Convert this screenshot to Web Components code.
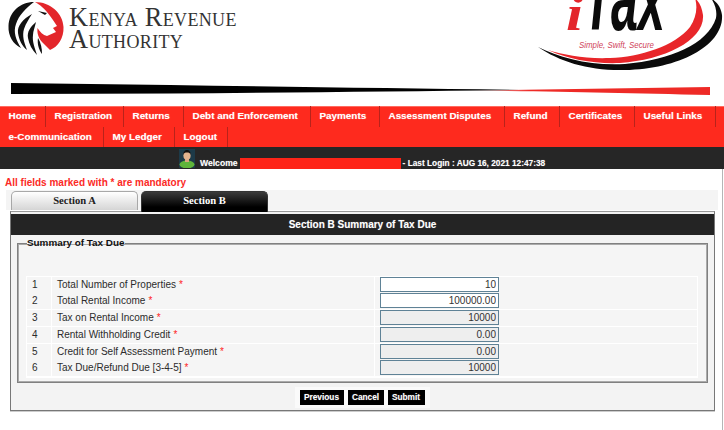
<!DOCTYPE html>
<html><head><meta charset="utf-8"><title>iTax</title>
<style>
html,body{margin:0;padding:0;background:#fff;overflow:hidden}
body{width:724px;height:430px;font-family:"Liberation Sans",Arial,sans-serif}
</style></head><body>
<kra-page>
  <kra-header></kra-header>
  <kra-nav></kra-nav>
  <kra-welcome></kra-welcome>
  <kra-main>
    <kra-tabs></kra-tabs>
    <kra-panel heading="Section B Summary of Tax Due">
      <kra-fieldset legend="Summary of Tax Due">
        <kra-row num="1" label="Total Number of Properties" value="10"></kra-row>
        <kra-row num="2" label="Total Rental Income" value="100000.00"></kra-row>
        <kra-row num="3" label="Tax on Rental Income" value="10000" readonly></kra-row>
        <kra-row num="4" label="Rental Withholding Credit" value="0.00" readonly></kra-row>
        <kra-row num="5" label="Credit for Self Assessment Payment" value="0.00" readonly></kra-row>
        <kra-row num="6" label="Tax Due/Refund Due [3-4-5]" value="10000" readonly></kra-row>
      </kra-fieldset>
      <kra-actions></kra-actions>
    </kra-panel>
  </kra-main>
</kra-page>
<script>
function def(name, css, html){
  customElements.define(name, class extends HTMLElement{
    connectedCallback(){
      if(this.shadowRoot) return;
      const r=this.attachShadow({mode:'open'});
      const h=typeof html==='function'?html(this):html;
      r.innerHTML='<style>'+css+'</style>'+h;
    }
  });
}
def('kra-page',':host{display:block;width:724px;height:430px;overflow:hidden}','<slot></slot>');

def('kra-header',`
:host{display:block;height:106px;overflow:hidden;background:#fff}
.top{display:flex;height:81px}
.lion{flex:none;width:70px;height:60px;display:block}
.name{flex:none;margin:6px 0 0 -1px;font-family:"Liberation Serif",serif;font-variant:small-caps;color:#333;font-size:26.4px;line-height:22px;letter-spacing:.35px;white-space:nowrap}
.tax{flex:none;margin-left:auto;width:194px;height:75px;display:block;overflow:hidden}
.sw{display:block;width:724px;height:25px}
`,`
<div class="top">
<svg class="lion" viewBox="0 0 70 60" aria-hidden="true">
  <path fill="#e3262b" d="M35 2C50 2 63 13 63.500 27 64 38 58 47 50 50L42 42C38 37 37 33 37.500 28 40 32 43 35 47 36L56 32 53 28 57 26C53 20 48 12 42 7 40 5 37 3 35 2Z"/>
  <path fill="#111" d="M34 2C20 2 9 12 8.500 26 8 36 13 44 21 48 16 40 13 32 16 24 19 15 26 8 34 2Z"/>
  <path fill="#111" d="M32 14C23 19 17 26 18 33 19 40 22 46 27 50 24 42 22 36 24 29 26 23 29 19 32 14Z"/>
  <path fill="#111" d="M36 22C30 27 27 32 28 38 29 44 32 50 37 55 35 48 32 42 33 35 33 31 35 27 36 22Z"/>
  <path fill="#111" d="M38 38C37 44 39 50 42 54 42 48 41 43 38 38Z"/>
  <path fill="#111" d="M38 11L47 13 45 15Z"/>
</svg>
<div class="name">Kenya Revenue<br>Authority</div>
<svg class="tax" viewBox="530 0 194 75">
  <path fill="#0b0b0b" d="M538 47C560 62 590 71 625 70 680 69 724 45 722 15 721 8 718 3 711-2 716 6 717 12 716 18 708 44 670 60 625 64 590 66 560 58 538 47Z"/>
  <path fill="#e8262a" d="M548 50C570 60 595 64 620 63 665 60 705 40 703 15 702 8 700 3 695-2 698 8 696 18 690 27 675 46 640 57 610 58 585 59 565 55 548 50Z"/>
  <text x="583" y="30" font-family="Liberation Sans" font-style="italic" font-weight="700" font-size="92" fill="#0b0b0b" textLength="82" lengthAdjust="spacingAndGlyphs">Tax</text>
  <text x="566" y="30" font-family="Liberation Serif" font-style="italic" font-weight="700" font-size="50" fill="#e3262b" textLength="17" lengthAdjust="spacingAndGlyphs">i</text>
  <text x="579" y="48" font-family="Liberation Sans" font-style="italic" font-size="8.6" fill="#d0435a" textLength="75" lengthAdjust="spacingAndGlyphs">Simple, Swift, Secure</text>
</svg>
</div>
<svg class="sw" viewBox="0 81 724 25" aria-hidden="true">
  <defs><linearGradient id="g" x1="0" x2="1"><stop offset="0" stop-color="#e8262a" stop-opacity=".1"/><stop offset=".25" stop-color="#ee2a26"/><stop offset="1" stop-color="#ee2a26"/></linearGradient></defs>
  <path fill="#000" d="M11 83L11 94 170 93.500C300 92.500 420 91 530 90 420 88.500 300 87 170 85Z"/>
  <path fill="url(#g)" d="M470 90.500L710 87 710 95C620 93 560 91.500 470 90.500Z"/>
</svg>`);

const rows=[
 [['Home',46],['Registration',78],['Returns',60],['Debt and Enforcement',127],['Payments',69],['Assessment Disputes',125],['Refund',55],['Certificates',75],['Useful Links',81]],
 [['e-Communication',104],['My Ledger',71],['Logout',53]]
];
def('kra-nav-item',`
:host{display:block;flex:none;box-sizing:border-box;padding-left:8.5px;border-right:1px solid #b8231b;height:20.5px;color:#fff;font:bold 9.9px/19px "Liberation Sans",sans-serif;white-space:nowrap;text-shadow:0 0 1px rgba(255,255,255,.5)}
`,'<slot></slot>');
def('kra-nav',`
:host{display:block;height:41px;background:#fe2a1e;box-shadow:inset 0 1px 0 #ff6a60}
.r{display:flex;height:20.5px}
`,()=>rows.map(r=>'<div class="r">'+r.map(([t,w])=>`<kra-nav-item style="width:${w}px">${t}</kra-nav-item>`).join('')+'</div>').join(''));

def('kra-welcome',`
:host{display:flex;align-items:flex-end;height:22px;background:#262626;padding-left:179px;box-sizing:border-box;color:#fff;font:bold 8.6px/11px "Liberation Sans",sans-serif;white-space:nowrap;text-shadow:0 0 1px rgba(255,255,255,.4)}
svg{flex:none;width:16px;height:19px;align-self:flex-start;margin-top:2px;display:block}
.w{margin-left:5px}
.red{flex:none;width:161px;height:11px;background:#fe2418;margin:0 2px}
.l{font-size:8.3px}
`,`<svg viewBox="0 0 16 19" aria-hidden="true">
<rect width="16" height="19" fill="#1d3a48"/>
<ellipse cx="8" cy="15.5" rx="7.5" ry="4" fill="#5fb53a"/>
<rect x="6" y="9" width="4" height="4" fill="#d9a67f"/>
<ellipse cx="8" cy="6.5" rx="3.6" ry="4.4" fill="#e3b48e"/>
<path d="M4.300 6C4 2.500 6 1 8 1s4 1.500 3.700 5C11 4 10 3.600 8 3.600S5 4 4.300 6Z" fill="#111"/>
</svg><span class="w">Welcome</span><span class="red"></span><span class="l">- Last Login : AUG 16, 2021 12:47:38</span>`);

def('kra-main',`
:host{display:block;height:261px;box-sizing:border-box;margin-right:1px;border-right:1px solid #b5b5b5;background:#fff}
.m{font:bold 10px/14px "Liberation Sans",sans-serif;color:#fb2a26;padding:7px 0 0 5px;height:14px;white-space:nowrap}
`,`<div class="m">All fields marked with * are mandatory</div><slot></slot>`);

def('kra-tabs',`
:host{display:flex;gap:3px;box-sizing:border-box;height:20px;width:712px;margin:0 0 0 6px;padding:1px 0 0 5px;background:#f4f4f4;position:relative;z-index:1}
.t{flex:none;width:127px;height:19px;box-sizing:border-box;border-radius:5px 5px 0 0;text-align:center;font:bold 10.6px/17px "Liberation Serif",serif;white-space:nowrap}
.a{background:linear-gradient(#fff,#d5d5d5);border:1px solid #a8a8a8;border-bottom:0;color:#222}
.b{height:21px;background:linear-gradient(#3a3a3a,#000 75%);border:1px solid #333;border-bottom:0;color:#fff}
`,`<div class="t a">Section A</div><div class="t b">Section B</div>`);

def('kra-panel',`
:host{display:block;box-sizing:border-box;width:705px;height:200px;margin:1px 0 0 10px;border:1px solid #777;border-top-color:#999;background:#f3f3f3;padding-top:2px;box-shadow:0 1px 0 #ccc}
.h{height:21px;background:#242424;color:#fff;text-align:center;font:bold 10px/21px "Liberation Sans",sans-serif;text-shadow:0 0 1px rgba(255,255,255,.35)}
`,(el)=>`<div class="h">${el.getAttribute('heading')}</div><slot></slot>`);

def('kra-fieldset',`
:host{display:block;margin:0 6px 0 6px}
fieldset{margin:1px 0 0;padding:25.5px 8px 0 8px;height:147px;box-sizing:border-box;border:1px solid #808080;box-shadow:inset 0 0 0 1px #aaa;background:#f5f5f5}
legend{padding:0;margin-left:1px;font:bold 9.9px/14px "Liberation Sans",sans-serif;color:#111}
.t{display:flex;flex-direction:column;background:#fff;padding:1px;width:672px;box-sizing:border-box}
`,(el)=>`<fieldset><legend>${el.getAttribute('legend')}</legend><div class="t"><slot></slot></div></fieldset>`);

def('kra-row',`
:host{display:grid;grid-template-columns:25px 323px 322px;height:16.8px;box-sizing:border-box;font:10px/16px "Liberation Sans",sans-serif;color:#2c2c2c;border-bottom:1px solid #fff}
div{background:#f5f5f5;white-space:nowrap;box-sizing:border-box;border-right:1px solid #fff}
.n{padding-left:5px}
.l{padding-left:5px}
.s{color:#f22;margin-left:3px}
.f{padding:0 0 0 5px;border-right:0}
input{display:block;box-sizing:border-box;width:119px;height:15px;margin:0;padding:0 2px;border:1px solid #5f8296;border-radius:0;background:#fff;text-align:right;font:10px "Liberation Sans",sans-serif;color:#333;outline:0}
input.ro{background:#eee}
`,(el)=>{const ro=el.hasAttribute('readonly');return `<div class="n">${el.getAttribute('num')}</div><div class="l">${el.getAttribute('label')}<span class="s">*</span></div><div class="f"><input readonly class="${ro?'ro':''}" value="${el.getAttribute('value')}"></div>`});

def('kra-actions',`
:host{display:flex;justify-content:center;margin-top:4px;height:21px}
.w{display:flex;gap:4px;background:#fafafa;padding:2.500px 5px 2px;margin-left:-1px}
button{all:unset;box-sizing:border-box;height:15.5px;background:#000;color:#fff;font:bold 8.3px/15px "Liberation Sans",sans-serif;text-align:center;text-shadow:0 0 1px rgba(255,255,255,.4)}
`,`<div class="w"><button style="width:44px">Previous</button><button style="width:36px">Cancel</button><button style="width:37px">Submit</button></div>`);
</script>
</body></html>
